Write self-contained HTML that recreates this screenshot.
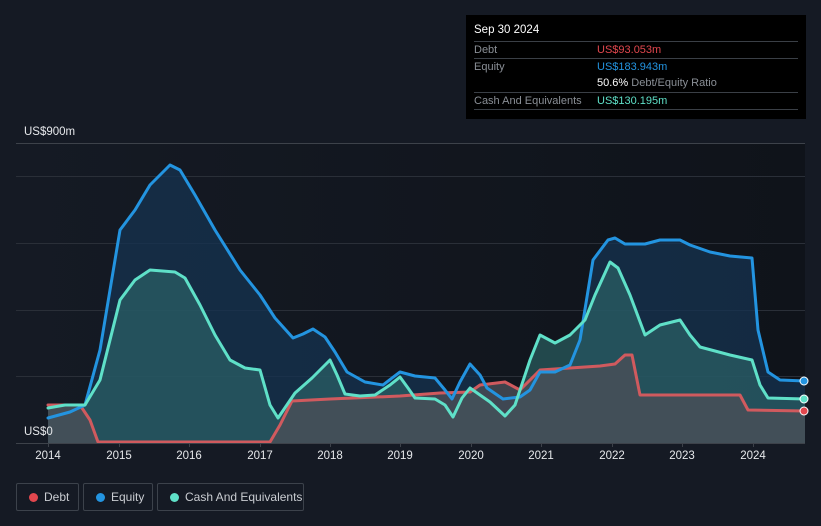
<!DOCTYPE html>
<html><head><meta charset="utf-8"><style>
*{margin:0;padding:0;box-sizing:border-box}
body{width:821px;height:526px;background:#151a24;font-family:"Liberation Sans",sans-serif;overflow:hidden;position:relative}
.tt{position:absolute;left:466px;top:15px;width:340px;height:104px;background:#000;color:#fff;font-size:11px}
.tt .h{position:absolute;left:8px;top:9px;font-size:11.5px}
.row{position:absolute;left:8px;width:324px;height:17px;border-top:1px solid #3a3f46;color:#8a8f96}
.row span{position:absolute;left:123px;top:2px}
.row .l{left:0}
.lg{position:absolute;top:483px;height:28px;border:1px solid #3c424b;border-radius:2px;color:#c9ccd1;font-size:12px;line-height:26px;padding-left:27px;white-space:nowrap}
.lg i{position:absolute;left:12px;top:9px;width:9px;height:9px;border-radius:50%}
.ax{position:absolute;top:450px;color:#e6e8eb;font-size:11.5px;transform:translateX(-50%)}
</style></head><body>
<svg width="821" height="526" style="position:absolute;left:0;top:0">
<defs>
<linearGradient id="pb" x1="0" x2="1"><stop offset="0" stop-color="#151a24"/><stop offset="1" stop-color="#0f131a"/></linearGradient>
</defs>
<rect x="16" y="143" width="789" height="300" fill="url(#pb)"/>
<g stroke="#2a2f38" stroke-width="1">
<line x1="16" x2="805" y1="176.5" y2="176.5"/><line x1="16" x2="805" y1="243.5" y2="243.5"/><line x1="16" x2="805" y1="310.5" y2="310.5"/><line x1="16" x2="805" y1="376.5" y2="376.5"/>
</g>
<line x1="16" x2="805" y1="143.5" y2="143.5" stroke="#3d424a"/>
<path d="M48,418 L70,412 L85,405 L100,350 L120,230 L135,210 L150,185 L170,165 L180,170 L195,195 L215,230 L240,270 L260,295 L275,318 L293,338 L303,334 L313,329 L325,337 L335,352 L347,372 L365,382 L383,385 L392,378 L400,372 L415,376 L435,378 L445,390 L452,399 L460,382 L470,364 L480,375 L487,388 L503,399 L520,397 L530,390 L540,372 L555,372 L570,365 L580,340 L593,260 L608,240 L615,238 L625,244 L645,244 L660,240 L680,240 L690,245 L710,252 L730,256 L752,258 L758,330 L768,372 L780,380 L805,381 L805,443 L48,443Z" fill="#163350" fill-opacity="0.75"/>
<path d="M48,408 L65,405 L85,405 L100,380 L120,300 L135,280 L150,270 L175,272 L185,278 L200,305 L215,335 L230,360 L245,368 L260,370 L270,405 L278,418 L295,393 L312,378 L322,368 L330,360 L337,375 L345,394 L360,396 L375,395 L390,385 L400,377 L408,388 L415,398 L435,399 L445,405 L453,417 L462,398 L470,388 L490,402 L505,416 L515,405 L530,360 L540,335 L555,343 L570,335 L585,320 L595,295 L610,262 L618,268 L630,295 L645,335 L660,325 L680,320 L690,335 L700,347 L730,355 L752,360 L760,385 L768,398 L805,399 L805,443 L48,443Z" fill="#2e6b6c" fill-opacity="0.6"/>
<path d="M48,405 L80,405 L90,420 L98,442 L270,442 L280,425 L292,401 L330,399 L400,396 L440,393 L470,392 L480,385 L505,382 L520,390 L535,375 L540,370 L600,366 L615,364 L625,355 L632,355 L640,395 L740,395 L748,410 L805,411 L805,443 L48,443Z" fill="#4a4f58" fill-opacity="0.8"/>
<g fill="none" stroke-width="3" stroke-linejoin="round" stroke-linecap="round">
<path d="M48,405 L80,405 L90,420 L98,442 L270,442 L280,425 L292,401 L330,399 L400,396 L440,393 L470,392 L480,385 L505,382 L520,390 L535,375 L540,370 L600,366 L615,364 L625,355 L632,355 L640,395 L740,395 L748,410 L805,411" stroke="#d05a5e"/>
<path d="M48,418 L70,412 L85,405 L100,350 L120,230 L135,210 L150,185 L170,165 L180,170 L195,195 L215,230 L240,270 L260,295 L275,318 L293,338 L303,334 L313,329 L325,337 L335,352 L347,372 L365,382 L383,385 L392,378 L400,372 L415,376 L435,378 L445,390 L452,399 L460,382 L470,364 L480,375 L487,388 L503,399 L520,397 L530,390 L540,372 L555,372 L570,365 L580,340 L593,260 L608,240 L615,238 L625,244 L645,244 L660,240 L680,240 L690,245 L710,252 L730,256 L752,258 L758,330 L768,372 L780,380 L805,381" stroke="#2394e0"/>
<path d="M48,408 L65,405 L85,405 L100,380 L120,300 L135,280 L150,270 L175,272 L185,278 L200,305 L215,335 L230,360 L245,368 L260,370 L270,405 L278,418 L295,393 L312,378 L322,368 L330,360 L337,375 L345,394 L360,396 L375,395 L390,385 L400,377 L408,388 L415,398 L435,399 L445,405 L453,417 L462,398 L470,388 L490,402 L505,416 L515,405 L530,360 L540,335 L555,343 L570,335 L585,320 L595,295 L610,262 L618,268 L630,295 L645,335 L660,325 L680,320 L690,335 L700,347 L730,355 L752,360 L760,385 L768,398 L805,399" stroke="#5fe0c8"/>
</g>
<line x1="16" x2="805" y1="443.5" y2="443.5" stroke="#3d424a"/>
<g stroke="#3d424a"><line x1="48.5" x2="48.5" y1="443" y2="447"/><line x1="119.5" x2="119.5" y1="443" y2="447"/><line x1="189.5" x2="189.5" y1="443" y2="447"/><line x1="260.5" x2="260.5" y1="443" y2="447"/><line x1="330.5" x2="330.5" y1="443" y2="447"/><line x1="400.5" x2="400.5" y1="443" y2="447"/><line x1="471.5" x2="471.5" y1="443" y2="447"/><line x1="541.5" x2="541.5" y1="443" y2="447"/><line x1="612.5" x2="612.5" y1="443" y2="447"/><line x1="682.5" x2="682.5" y1="443" y2="447"/><line x1="753.5" x2="753.5" y1="443" y2="447"/></g>
<circle cx="804" cy="381" r="4" fill="#2394e0" stroke="#fff" stroke-width="1"/>
<circle cx="804" cy="399" r="4" fill="#5fe0c8" stroke="#fff" stroke-width="1"/>
<circle cx="804" cy="411" r="4" fill="#e2474e" stroke="#fff" stroke-width="1"/>
<text x="24" y="135" fill="#e6e8eb" font-size="11.5" font-family="Liberation Sans">US$900m</text>
<text x="24" y="435" fill="#e6e8eb" font-size="11.5" font-family="Liberation Sans">US$0</text>
</svg>
<div class="ax" style="left:48px">2014</div><div class="ax" style="left:119px">2015</div><div class="ax" style="left:189px">2016</div><div class="ax" style="left:260px">2017</div><div class="ax" style="left:330px">2018</div><div class="ax" style="left:400px">2019</div><div class="ax" style="left:471px">2020</div><div class="ax" style="left:541px">2021</div><div class="ax" style="left:612px">2022</div><div class="ax" style="left:682px">2023</div><div class="ax" style="left:753px">2024</div>
<div class="tt">
<div class="h">Sep 30 2024</div>
<div class="row" style="top:26px"><span class="l">Debt</span><span style="color:#e2474e">US$93.053m</span></div>
<div class="row" style="top:43px"><span class="l">Equity</span><span style="color:#2394e0">US$183.943m</span></div>
<div style="position:absolute;left:131px;top:62px;color:#8a8f96"><b style="color:#fff;font-weight:normal">50.6%</b> Debt/Equity Ratio</div>
<div class="row" style="top:77px"><span class="l">Cash And Equivalents</span><span style="color:#5fe0c8">US$130.195m</span></div>
<div class="row" style="top:94px;height:1px"></div>
</div>
<div class="lg" style="left:16px;width:63px"><i style="background:#e2474e"></i>Debt</div>
<div class="lg" style="left:83px;width:70px"><i style="background:#2394e0"></i>Equity</div>
<div class="lg" style="left:157px;width:147px"><i style="background:#5fe0c8"></i>Cash And Equivalents</div>
</body></html>
